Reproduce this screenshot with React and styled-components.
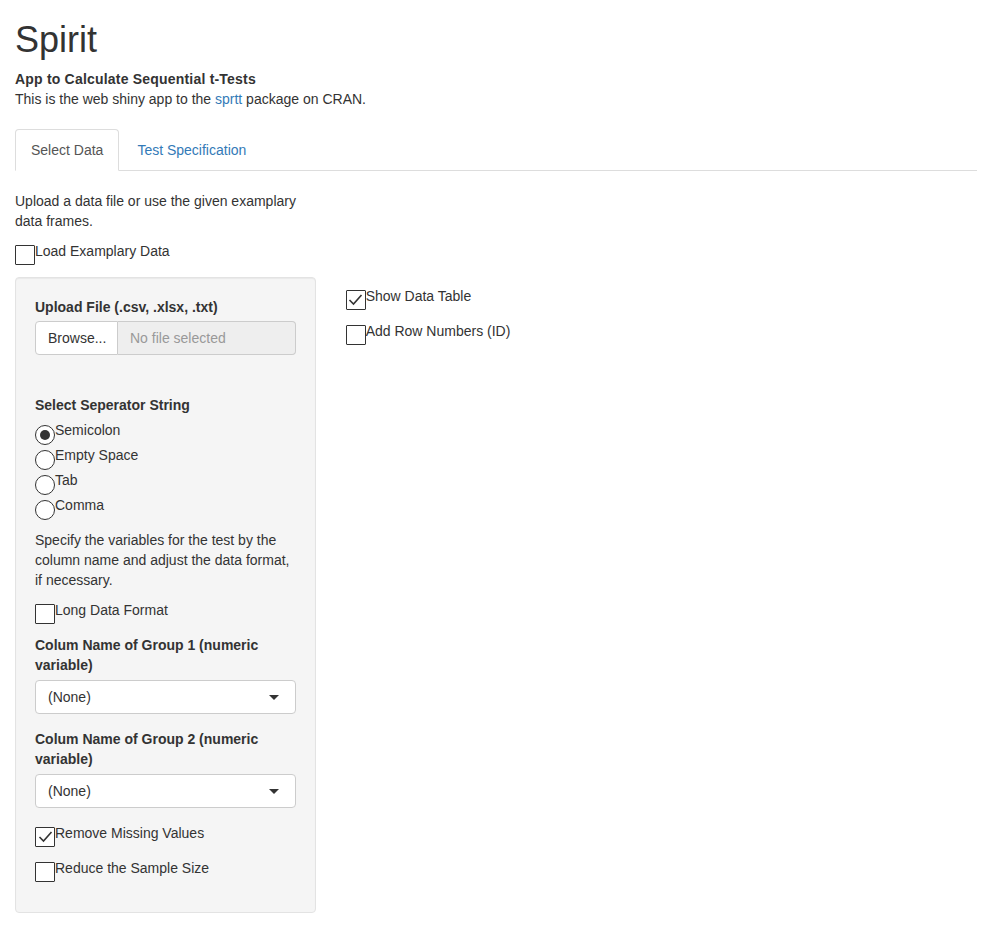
import React from "react";
import styled, { createGlobalStyle } from "styled-components";

const Global = createGlobalStyle`
  html, body { margin: 0; padding: 0; background: #fff; }
  body {
    font-family: "Liberation Sans", Arial, sans-serif;
    font-size: 14px;
    line-height: 20px;
    color: #333;
  }
  * { box-sizing: border-box; }
`;

const Page = styled.div`
  padding: 0 15px;
`;

const Title = styled.h1`
  font-size: 36px;
  font-weight: 500;
  line-height: 39.6px;
  margin: 20px 0 9px;
`;

const Subtitle = styled.h4`
  font-size: 14px;
  font-weight: 700;
  line-height: 20px;
  margin: 0;
  letter-spacing: 0.2px;
`;

const Text = styled.p`
  margin: ${(p) => p.$m || "0"};
  width: ${(p) => p.$w || "auto"};
`;

const Link = styled.a`
  color: #337ab7;
  text-decoration: none;
`;

const TabBar = styled.ul`
  display: flex;
  list-style: none;
  margin: 20px 0 0;
  padding: 0;
  border-bottom: 1px solid #ddd;
`;

const Tab = styled.li`
  margin-right: 2px;
  margin-bottom: -1px;
  padding: 10px 15px;
  line-height: 20px;
  border: 1px solid ${(p) => (p.$active ? "#ddd" : "transparent")};
  border-bottom-color: transparent;
  border-radius: 4px 4px 0 0;
  background: ${(p) => (p.$active ? "#fff" : "transparent")};
  color: ${(p) => (p.$active ? "#555" : "#337ab7")};
  cursor: pointer;
`;

const Pane = styled.div`
  padding-top: 20px;
`;

const Row = styled.div`
  display: grid;
  grid-template-columns: 300.67px 1fr;
  column-gap: 30px;
  align-items: start;
`;

const Well = styled.div`
  margin-top: 12px;
  background: #f5f5f5;
  border: 1px solid #e3e3e3;
  border-radius: 4px;
  box-shadow: inset 0 1px 1px rgba(0, 0, 0, 0.05);
  padding: 19px;
  display: flex;
  flex-direction: column;
`;

const Main = styled.div`
  padding-top: 21px;
  display: flex;
  flex-direction: column;
`;

const Label = styled.div`
  font-weight: 700;
  margin: ${(p) => p.$m || "0"};
`;

const CheckRow = styled.label`
  display: flex;
  align-items: flex-start;
  margin-top: ${(p) => p.$mt || 0}px;
  cursor: pointer;
`;

const Box = styled.span`
  flex: none;
  width: 20px;
  height: 20px;
  margin-top: 4px;
  border: 1.5px solid #333;
  border-radius: 1px;
  background: #fff;
  display: flex;
  align-items: center;
  justify-content: center;
  svg { display: block; }
`;

const RadioCircle = styled.span`
  flex: none;
  width: 20px;
  height: 20px;
  margin-top: 5px;
  border: 1.5px solid #333;
  border-radius: 50%;
  background: #fff;
  display: flex;
  align-items: center;
  justify-content: center;
  &::after {
    content: "";
    width: 10px;
    height: 10px;
    border-radius: 50%;
    background: #333;
    display: ${(p) => (p.$on ? "block" : "none")};
  }
`;

const RadioRow = styled.label`
  display: flex;
  align-items: flex-start;
  height: 25px;
  cursor: pointer;
`;

const RadioGroup = styled.div`
  display: flex;
  flex-direction: column;
  margin-top: 5px;
`;

const FileGroup = styled.div`
  display: flex;
  height: 34px;
  margin-top: 4px;
  margin-bottom: 40px;
`;

const BrowseBtn = styled.span`
  width: 83px;
  padding: 6px 12px;
  background: #fff;
  border: 1px solid #ccc;
  border-radius: 4px 0 0 4px;
  color: #333;
`;

const FileField = styled.span`
  flex: 1;
  padding: 6px 12px;
  background: #eee;
  border: 1px solid #ccc;
  border-left: none;
  border-radius: 0 4px 4px 0;
  color: #999;
`;

const Select = styled.div`
  position: relative;
  height: 34px;
  margin-top: 5px;
  padding: 6px 12px;
  background: #fff;
  border: 1px solid #ccc;
  border-radius: 4px;
  color: #333;
  &::after {
    content: "";
    position: absolute;
    right: 16px;
    top: 14px;
    border-left: 5px solid transparent;
    border-right: 5px solid transparent;
    border-top: 5px solid #333;
  }
`;

const Spacer = styled.div`
  height: 11px;
`;

const Check = ({ on }) => (
  <Box>
    {on && (
      <svg width="17" height="17" viewBox="0 0 17 17">
        <polyline points="2.5,9 6.5,13 14.5,4" fill="none" stroke="#333" strokeWidth="1.6" />
      </svg>
    )}
  </Box>
);

const Checkbox = ({ on, mt, children }) => (
  <CheckRow $mt={mt}>
    <Check on={on} />
    <span>{children}</span>
  </CheckRow>
);

const Radio = ({ on, children }) => (
  <RadioRow>
    <RadioCircle $on={on} />
    <span>{children}</span>
  </RadioRow>
);

export default function App() {
  return (
    <>
      <Global />
      <Page>
        <Title>Spirit</Title>
        <Subtitle>App to Calculate Sequential t-Tests</Subtitle>
        <Text>
          This is the web shiny app to the <Link href="#">sprtt</Link> package on CRAN.
        </Text>
        <TabBar>
          <Tab $active>Select Data</Tab>
          <Tab>Test Specification</Tab>
        </TabBar>
        <Pane>
          <Text $w="300px">Upload a data file or use the given examplary data frames.</Text>
          <Checkbox mt={10}>Load Examplary Data</Checkbox>
          <Row>
            <Well>
              <Label>Upload File (.csv, .xlsx, .txt)</Label>
              <FileGroup>
                <BrowseBtn>Browse...</BrowseBtn>
                <FileField>No file selected</FileField>
              </FileGroup>
              <Label>Select Seperator String</Label>
              <RadioGroup>
                <Radio on>Semicolon</Radio>
                <Radio>Empty Space</Radio>
                <Radio>Tab</Radio>
                <Radio>Comma</Radio>
              </RadioGroup>
              <Text $m="10px 0 0">
                Specify the variables for the test by the column name and adjust the data format,
                if necessary.
              </Text>
              <Checkbox mt={10}>Long Data Format</Checkbox>
              <Label $m="11px 0 0">Colum Name of Group 1 (numeric variable)</Label>
              <Select>(None)</Select>
              <Label $m="15px 0 0">Colum Name of Group 2 (numeric variable)</Label>
              <Select>(None)</Select>
              <Checkbox mt={15} on>
                Remove Missing Values
              </Checkbox>
              <Checkbox mt={11}>Reduce the Sample Size</Checkbox>
              <Spacer />
            </Well>
            <Main>
              <Checkbox on>Show Data Table</Checkbox>
              <Checkbox mt={11}>Add Row Numbers (ID)</Checkbox>
            </Main>
          </Row>
        </Pane>
      </Page>
    </>
  );
}
